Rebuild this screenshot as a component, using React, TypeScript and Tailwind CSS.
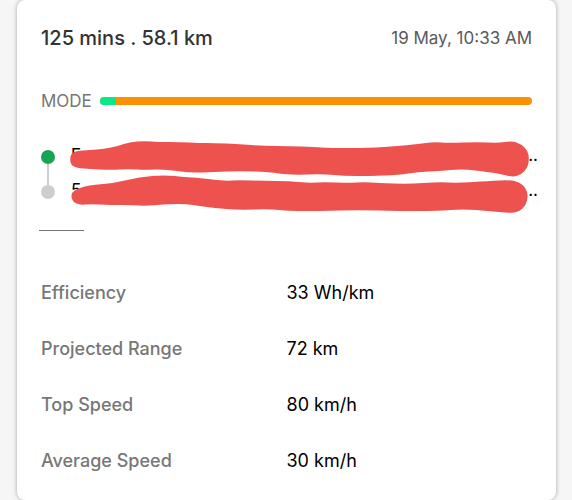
const stats = [
  { label: "Efficiency", value: "33 Wh/km" },
  { label: "Projected Range", value: "72 km" },
  { label: "Top Speed", value: "80 km/h" },
  { label: "Average Speed", value: "30 km/h" },
];

const stops = [
  { start: "F", end: "..", dot: "bg-[#17a554]" },
  { start: "5", end: "..", dot: "bg-[#cecece]" },
];

type Point = [number, number];

const strokes: Point[][] = [
  [
    [70, 158], [71, 153], [76, 150], [90, 149], [104, 148], [118, 145], [130, 141], [145, 140], [158, 141], [180, 141],
    [200, 142], [215, 142], [240, 143], [265, 145], [290, 145], [315, 146], [330, 147], [370, 147], [400, 145], [420, 143],
    [435, 141], [450, 142], [480, 141], [500, 142], [514, 140], [523, 143], [530, 150], [531, 158], [530, 166], [523, 174],
    [514, 176], [503, 173], [490, 171], [465, 168], [440, 170], [420, 171], [400, 174], [370, 175], [345, 175], [325, 173],
    [290, 174], [270, 171], [240, 170], [215, 171], [190, 172], [165, 168], [145, 169], [130, 168], [110, 169], [90, 168],
    [77, 167], [71, 164],
  ],
  [
    [71, 195], [73, 190], [82, 186], [92, 184], [115, 182], [140, 176], [165, 174], [185, 176], [200, 177], [225, 180],
    [240, 179], [265, 180], [290, 180], [310, 182], [325, 181], [350, 182], [365, 181], [380, 182], [410, 183], [440, 181],
    [460, 182], [490, 180], [512, 179], [521, 181], [528, 187], [530, 195], [528, 204], [521, 211], [512, 212], [490, 210],
    [465, 208], [440, 210], [400, 210], [360, 209], [320, 210], [290, 210], [270, 208], [240, 209], [215, 207], [200, 205],
    [187, 203], [170, 203], [145, 205], [135, 204], [110, 204], [90, 203], [80, 204], [73, 201],
  ],
];

// Closed curve that runs through the middle of each edge, rounding off the corners
function smoothPath(points: Point[]) {
  const middle = (a: Point, b: Point) => `${(a[0] + b[0]) / 2} ${(a[1] + b[1]) / 2}`;
  const last = points[points.length - 1];
  const curves = points.map((p, i) => `Q${p[0]} ${p[1]} ${middle(p, points[(i + 1) % points.length])}`);
  return `M${middle(last, points[0])}${curves.join("")}Z`;
}

// Hides the addresses of both stops
function Scribble() {
  return (
    <svg
      className="absolute inset-y-0 left-0 h-full w-[calc(100%-8px)]"
      viewBox="71 139 461 73"
      preserveAspectRatio="none"
      overflow="visible"
      fill="#ee524f"
      aria-hidden="true"
    >
      {strokes.map((points, i) => (
        <path key={i} d={smoothPath(points)} />
      ))}
    </svg>
  );
}

export default function App() {
  return (
    <div className="min-h-screen bg-[#f6f6f6] pr-4 pl-[17px] font-['Inter',sans-serif]">
      <main className="min-h-screen rounded-lg bg-white px-6 pt-[26px] pb-6 shadow-[0_0_4px_rgba(0,0,0,0.35)]">
        <header className="flex items-center justify-between">
          <h1 className="text-xl leading-6 font-medium text-[#333333]">125 mins . 58.1 km</h1>
          <time className="text-[17px] leading-6 text-[#595959]">19 May, 10:33 AM</time>
        </header>

        <section className="mt-[39px] flex items-center gap-1 leading-6">
          <h2 className="w-[55px] text-[17px] text-[#777777]">MODE</h2>
          <div className="flex h-2 flex-1 overflow-hidden rounded-full bg-[#fc9003]">
            <div className="w-4 bg-[#08e985]" />
          </div>
        </section>

        <section className="mt-[27px] -mr-1.5 flex gap-4">
          <div className="flex w-[14px] flex-col items-center pt-[10px]">
            <span className={`size-[14px] shrink-0 rounded-full ${stops[0].dot}`} />
            <span className="h-[21px] w-0.5 bg-[#cecece]" />
            <span className={`size-[14px] shrink-0 rounded-full ${stops[1].dot}`} />
          </div>
          <div className="relative h-[73px] flex-1">
            <ul className="pt-[3px] text-[17px] text-black">
              {stops.map((stop) => (
                <li key={stop.start} className="flex h-[35px] justify-between leading-6">
                  <span>{stop.start}</span>
                  <span>{stop.end}</span>
                </li>
              ))}
            </ul>
            <Scribble />
          </div>
        </section>

        <hr className="mt-[17px] -ml-0.5 w-[45px] border-[#777777]" />

        <dl className="mt-[50px] flex flex-col gap-8 text-lg leading-6">
          {stats.map((stat) => (
            <div key={stat.label} className="grid grid-cols-2">
              <dt className="font-medium text-[#777777]">{stat.label}</dt>
              <dd className="text-black">{stat.value}</dd>
            </div>
          ))}
        </dl>
      </main>
    </div>
  );
}
